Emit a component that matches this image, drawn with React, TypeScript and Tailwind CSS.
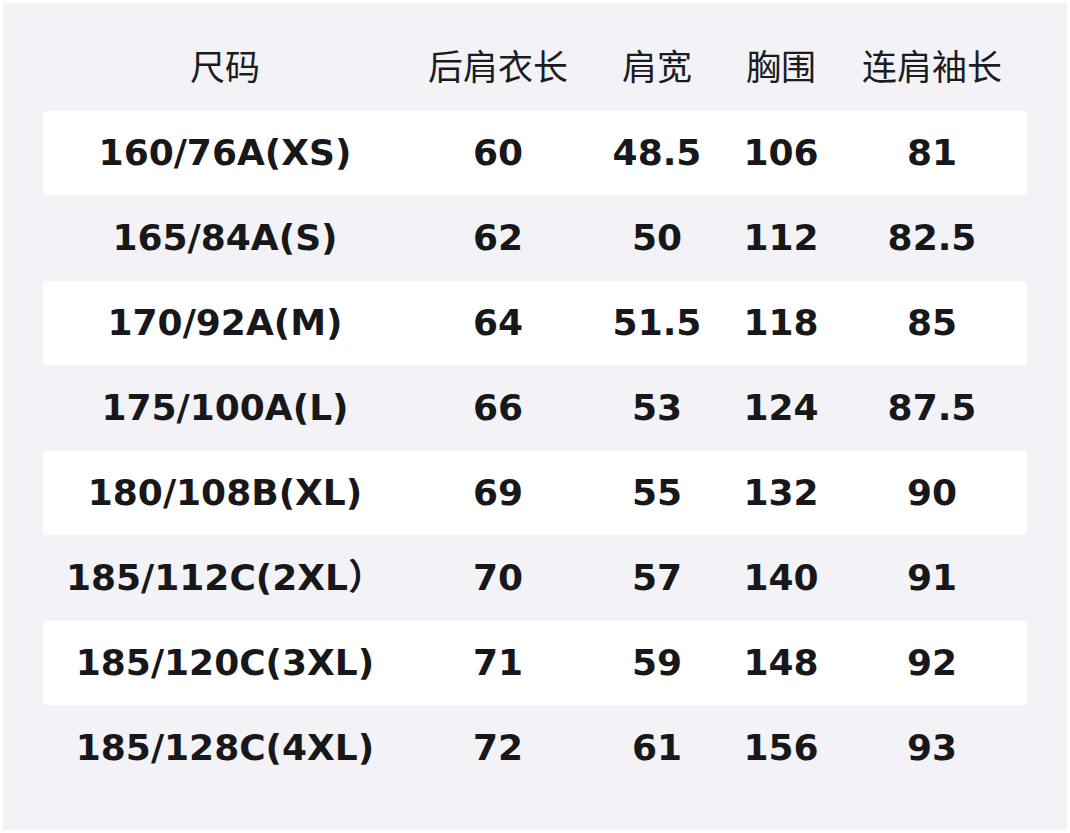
import React from "react";

const rows = [
  ["160/76A(XS)", "60", "48.5", "106", "81"],
  ["165/84A(S)", "62", "50", "112", "82.5"],
  ["170/92A(M)", "64", "51.5", "118", "85"],
  ["175/100A(L)", "66", "53", "124", "87.5"],
  ["180/108B(XL)", "69", "55", "132", "90"],
  ["185/112C(2XL）", "70", "57", "140", "91"],
  ["185/120C(3XL)", "71", "59", "148", "92"],
  ["185/128C(4XL)", "72", "61", "156", "93"],
];

const headers = ["尺码", "后肩衣长", "肩宽", "胸围", "连肩袖长"];
const widths = ["w-[364px]", "w-[182px]", "w-[136px]", "w-[112px]", "w-[190px]"];

export default function App() {
  return (
    <div className="w-[1070px] h-[833px] bg-white p-[3px]">
      <div className="h-full bg-[#f2f2f7] pt-[23px] px-[40px]">
        <div
          className="flex h-[85px] items-center pb-[6px] text-[35px] text-[#1c1c1e]"
          style={{ fontFamily: '"Noto Sans CJK SC", "Noto Sans", sans-serif' }}
        >
          {headers.map((h, i) => (
            <div key={i} className={`${widths[i]} text-center`}>
              {h}
            </div>
          ))}
        </div>
        {rows.map((r, ri) => (
          <div
            key={ri}
            className={`flex items-center font-bold text-[36px] text-[#18181b] ${
              ri % 2 === 0 ? "h-[84px] bg-white rounded-[3px]" : "h-[86px]"
            }`}
            style={{ fontFamily: '"DejaVu Sans", "Noto Sans CJK SC", sans-serif' }}
          >
            {r.map((c, ci) => (
              <div key={ci} className={`${widths[ci]} text-center`}>
                {c}
              </div>
            ))}
          </div>
        ))}
      </div>
    </div>
  );
}
